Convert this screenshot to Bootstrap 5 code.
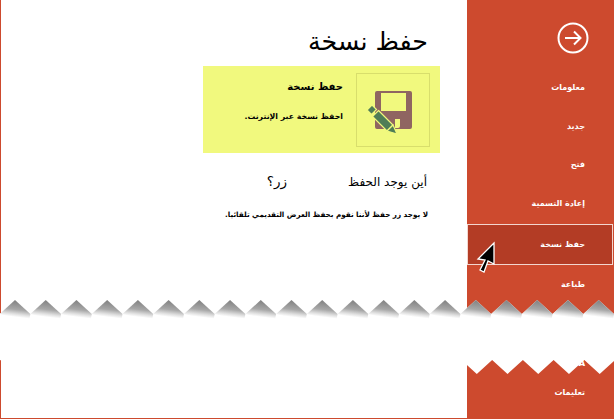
<!DOCTYPE html>
<html lang="ar">
<head>
<meta charset="utf-8">
<link href="https://cdn.jsdelivr.net/npm/bootstrap@5.3.0/dist/css/bootstrap.min.css" rel="stylesheet">
<style>
html,body{margin:0;height:100%;background:#fff;overflow:hidden}
body{font-family:"DejaVu Sans",sans-serif;color:#000}
.frame{width:614px;height:419px;position:relative;overflow:hidden;background:#fff}
.pane{width:467px;border-left:1px solid #cd4a2e;border-bottom:1px solid #cd4a2e}
.rail{width:147px;background:#cd4a2e}
.backdisc{width:32px;height:32px;margin:22px 25px 0 0;display:block;flex:none}
.railstack{margin-top:15px}
.railitem{height:38.6px;padding-right:29px;font-size:8px;font-weight:700;color:#fff;line-height:38.6px;text-align:right}
.railitem.sel{height:41px;line-height:39px;background:#b33c25;border:1px solid #f3d6cf;margin:1px 1px 1px 0;padding-right:27px}
.railitem.squeezed{height:30px;font-size:8.5px}
.title{font-size:25.3px;font-weight:400;line-height:36px;margin:24px 0 0;padding-right:39px;text-align:right}
.promo{width:237px;height:87px;margin:6px 27px 0 0;background:#f1f97e;padding:7px 10px}
.promoicon{width:74px;height:74px;border:1px solid #d8de6c;flex:none}
.promoicon svg{display:block}
.promotext{padding-right:13px;text-align:right}
.promotitle{font-size:10px;font-weight:700;line-height:16px;margin-top:6px}
.promosub{font-size:7.8px;font-weight:700;line-height:14px;margin-top:15px}
.ask{font-size:12px;line-height:18px;margin-top:19px;padding-right:40px;text-align:right;white-space:pre}
.askword{font-size:13.500px}
.note{font-size:7.2px;font-weight:700;line-height:14px;margin-top:17px;padding-right:39px;text-align:right}
.tear{position:absolute;left:0;top:296px;width:614px;height:84px;display:block}
.pointer{position:absolute;left:476px;top:241px;width:20px;height:32px;display:block}
</style>
</head>
<body>
<div class="frame d-flex">
  <main class="pane" dir="rtl">
    <h1 class="title">حفظ نسخة</h1>
    <div class="promo d-flex align-items-start">
      <div class="promoicon">
        <svg width="72" height="72" viewBox="0 0 72 72" aria-hidden="true">
          <path d="M20 17h33a2 2 0 0 1 2 2v34a2 2 0 0 1-2 2H20a2 2 0 0 1-2-2V19a2 2 0 0 1 2-2zM24 19v18h25V19zM38 45v9h3a2 2 0 0 0 2-2v-7z" fill="#8f6561" fill-rule="evenodd"/>
          <g stroke="#f1f97e" stroke-width="1.200">
            <path d="M21.500 36.500L36 51l-6 6-14.500-14.500z" fill="#4f7d56"/>
            <path d="M15 31l4.500 4.500-5 5L10 36z" fill="#4f7d56"/>
            <path d="M36 51l4 9-10-3z" fill="#4f7d56"/>
          </g>
        </svg>
      </div>
      <div class="promotext">
        <div class="promotitle">حفظ نسخة</div>
        <div class="promosub">احفظ نسخة عبر الإنترنت.</div>
      </div>
    </div>
    <div class="ask">أين يوجد الحفظ                <span class="askword">زر؟</span></div>
    <div class="note">لا يوجد زر حفظ لأننا نقوم بحفظ العرض التقديمي تلقائيا.</div>
  </main>
  <nav class="rail d-flex flex-column" dir="rtl">
    <svg class="backdisc" viewBox="0 0 32 32" aria-hidden="true">
      <circle cx="16" cy="16" r="14.500" fill="none" stroke="#fff" stroke-width="2"/>
      <path d="M8 16h15M17 9.500l6.500 6.500-6.500 6.500" fill="none" stroke="#fff" stroke-width="2"/>
    </svg>
    <div class="railstack">
      <div class="railitem">معلومات</div>
      <div class="railitem">جديد</div>
      <div class="railitem">فتح</div>
      <div class="railitem">إعادة التسمية</div>
      <div class="railitem sel">حفظ نسخة</div>
      <div class="railitem">طباعة</div>
      <div class="railitem">مشاركة</div>
      <div class="railitem squeezed" dir="rtl">DATA</div>
      <div class="railitem">تعليمات</div>
    </div>
  </nav>
  <svg class="pointer" viewBox="0 0 20 32" aria-hidden="true">
    <path d="M18 2L2 18l7 1-5 10 4 2 4-11 6 3z" fill="#000" stroke="#fff" stroke-width="1.300"/>
  </svg>
  <svg class="tear" viewBox="0 0 614 84" aria-hidden="true">
    <defs>
      <linearGradient id="sh" x1=".62" y1="0" x2=".42" y2="1">
        <stop offset="0" stop-color="#7e7e7e"/><stop offset=".5" stop-color="#a8a8a8"/><stop offset=".72" stop-color="#dedede"/><stop offset=".88" stop-color="#fff"/>
      </linearGradient>
    </defs>
    <path id="white" fill="#fff" d="M0 0"/>
    <g id="teeth" fill="url(#sh)"></g>
  </svg>
</div>
<script>
var P=30.72,x0=15,pk=[],i;
for(i=-1;i<21;i++)pk.push(x0+i*P);
var h=P/2,zig='M'+(pk[0]-h)+' 18',teeth='';
pk.forEach(function(x){
  zig+=' L'+x+' 4 L'+(x+h)+' 18';
  teeth+='<path d="M'+(x-h)+' 18 L'+x+' 4 L'+(x+h)+' 18 L'+(x+h-1)+' 23 L'+(x+3)+' 23 Z"/>';
});
zig+=' V64';
for(i=pk.length-1;i>=0;i--){zig+=' L'+(pk[i]+1)+' 78 L'+(pk[i]+1-h)+' 64';}
zig+=' Z';
document.getElementById('white').setAttribute('d',zig);
document.getElementById('teeth').innerHTML=teeth;
</script>
</body>
</html>
